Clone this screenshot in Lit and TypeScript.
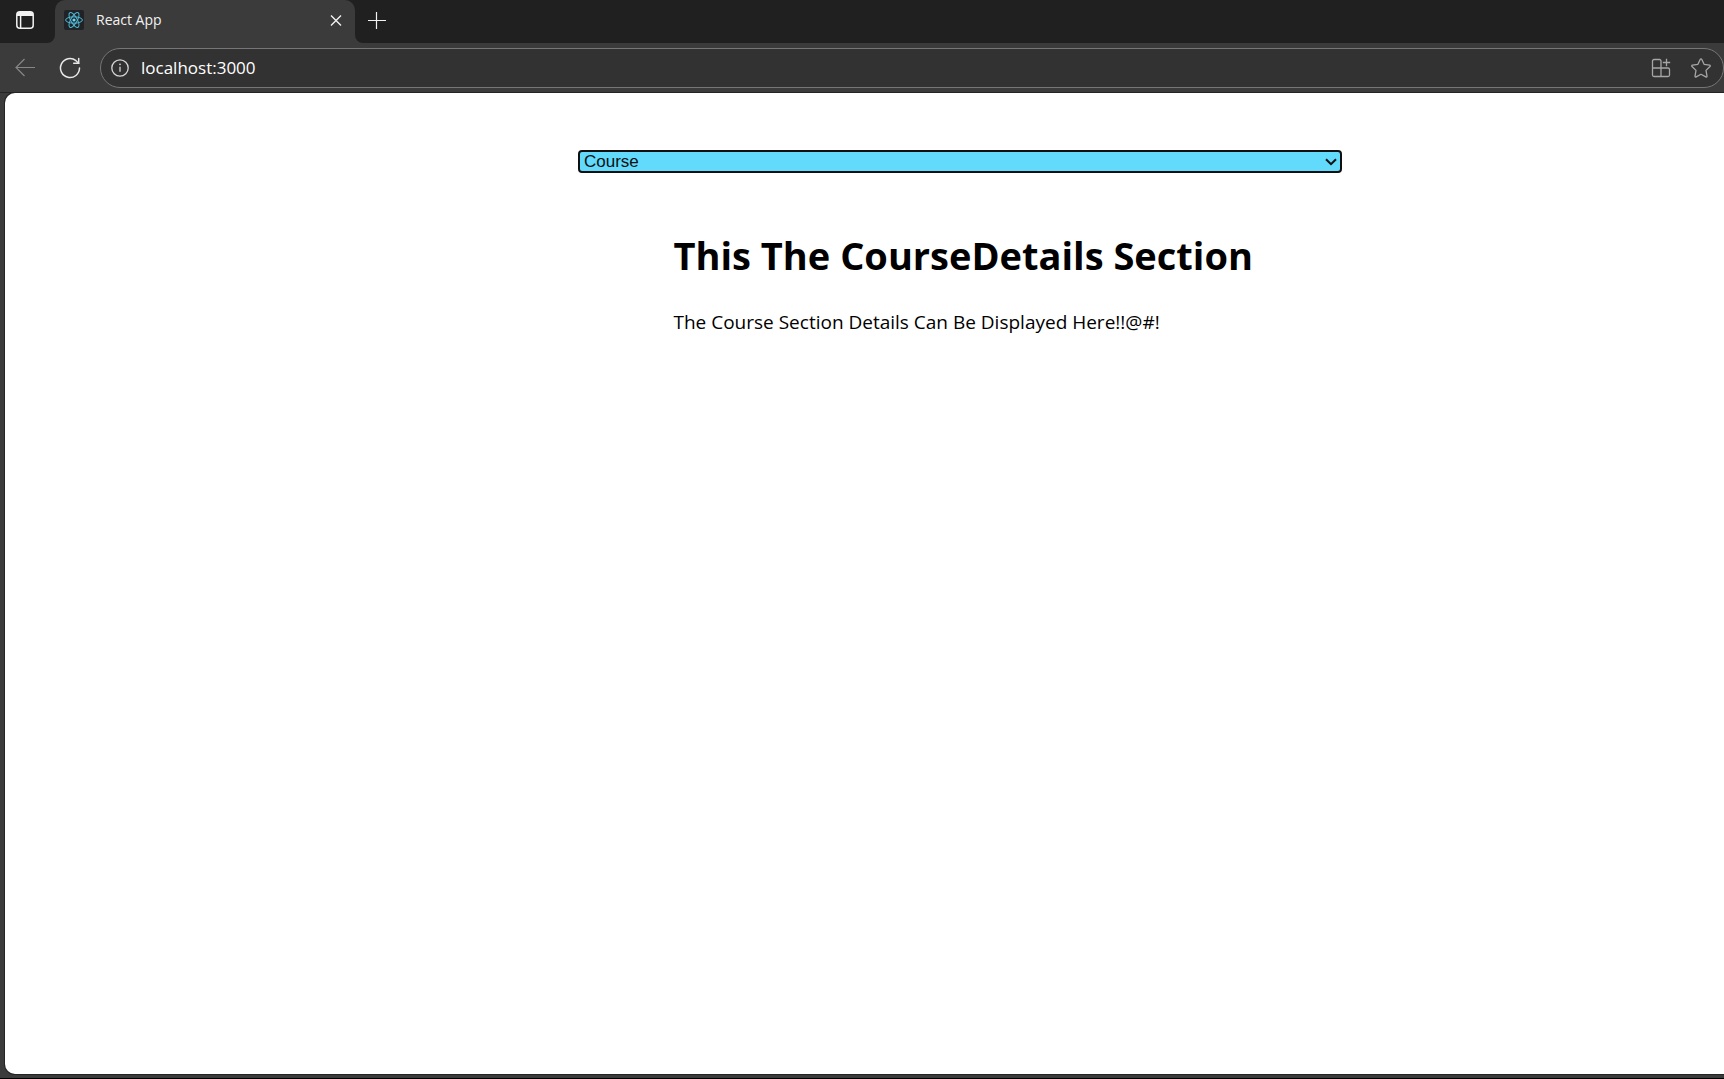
import { LitElement, html, css } from "lit";
import { customElement, state } from "lit/decorators.js";

@customElement("browser-tabs")
class BrowserTabs extends LitElement {
  static styles = css`
    :host {
      display: flex;
      height: 43px;
      color: #f2f2f2;
    }
    button {
      display: flex;
      align-items: center;
      justify-content: center;
      padding: 0;
      border: 0;
      background: none;
      color: inherit;
    }
    svg {
      display: block;
    }
    .row {
      display: flex;
      flex: 1;
      background: linear-gradient(#202020 50%, #3b3b3b 50%);
    }
    .menu-cell,
    .rest {
      display: flex;
      background: #202020;
    }
    .menu-cell {
      border-radius: 0 0 8px 0;
    }
    .rest {
      flex: 1;
      border-radius: 0 0 0 8px;
    }
    .menu {
      width: 55px;
      padding: 0 5px 3px 0;
    }
    .tab {
      display: flex;
      align-items: center;
      box-sizing: border-box;
      width: 300px;
      padding: 0 10px 3px 9px;
      gap: 12px;
      border-radius: 10px 10px 0 0;
      background: #3b3b3b;
    }
    .title {
      flex: 1;
      font: 14px/20px "Open Sans", "Noto Sans", sans-serif;
    }
    .new {
      width: 44px;
      padding-bottom: 4px;
    }
  `;

  render() {
    return html`
      <div class="row">
        <div class="menu-cell">
          <button class="menu" aria-label="Tab actions">
            <svg width="18" height="18" viewBox="0 0 18 18" fill="none" stroke="currentColor" stroke-width="1.5">
              <rect x="0.8" y="0.8" width="16.4" height="16.4" rx="3" />
              <path d="M1 3.5a2.5 2.5 0 0 1 2.5-2.5h11a2.5 2.5 0 0 1 2.5 2.5v1.5H1z" fill="currentColor" stroke="none" />
              <path d="M4.6 5v12" />
            </svg>
          </button>
        </div>
        <div class="tab">
          <svg width="20" height="20" viewBox="0 0 20 20" fill="none" stroke="#4fb9d6">
            <rect width="20" height="20" rx="2" fill="#202226" stroke="none" />
            <ellipse cx="10" cy="10" rx="8.4" ry="3.2" />
            <ellipse cx="10" cy="10" rx="8.4" ry="3.2" transform="rotate(60 10 10)" />
            <ellipse cx="10" cy="10" rx="8.4" ry="3.2" transform="rotate(120 10 10)" />
            <circle cx="10" cy="10" r="1.6" fill="#61dafb" stroke="none" />
          </svg>
          <span class="title">React App</span>
          <button aria-label="Close tab">
            <svg width="18" height="18" viewBox="0 0 18 18" fill="none" stroke="currentColor" stroke-width="1.4">
              <path d="M4 4.5l10 10M14 4.500l-10 10" />
            </svg>
          </button>
        </div>
        <div class="rest">
          <button class="new" aria-label="New tab">
            <svg width="18" height="18" viewBox="0 0 18 18" fill="none" stroke="currentColor" stroke-width="1.2">
              <path d="M0 9.5h18M8.5 1v17" />
            </svg>
          </button>
        </div>
      </div>
    `;
  }
}

@customElement("browser-toolbar")
class BrowserToolbar extends LitElement {
  @state() private address = "localhost:3000";

  static styles = css`
    :host {
      display: flex;
      align-items: center;
      box-sizing: border-box;
      height: 50px;
      padding: 1px 0 0 15px;
      background: #3b3b3b;
      border-bottom: 1px solid #242424;
      color: #e8e8e8;
    }
    button {
      display: block;
      padding: 0;
      border: 0;
      background: none;
      color: inherit;
    }
    svg {
      display: block;
    }
    .back {
      margin-right: 24px;
      color: #868686;
    }
    .reload {
      margin-right: 19px;
    }
    .address {
      display: flex;
      flex: 1;
      align-items: center;
      box-sizing: border-box;
      height: 40px;
      padding: 0 12px 0 10px;
      border: 1px solid #767676;
      border-radius: 20px;
      background: #323232;
    }
    input {
      flex: 1;
      min-width: 0;
      margin: 0 12px;
      padding: 0;
      border: 0;
      outline: 0;
      background: none;
      color: #fff;
      font: 17px/24px "Open Sans", "Noto Sans", sans-serif;
    }
    .info {
      color: #d6d6d6;
    }
    .tools {
      display: flex;
      gap: 20px;
      color: #a6a6a6;
    }
  `;

  render() {
    return html`
      <button class="back" aria-label="Back">
        <svg width="20" height="20" viewBox="0 0 20 20" fill="none" stroke="currentColor" stroke-width="1.2">
          <path d="M20 9.5H1M9.5 1L1 9.5l8.5 8.5" />
        </svg>
      </button>
      <button class="reload" aria-label="Reload">
        <svg width="22" height="22" viewBox="0 0 22 22" fill="none" stroke="currentColor" stroke-width="1.5" stroke-linecap="round">
          <path d="M20.5 11a9.5 9.5 0 1 1-3.5-7.3l2.6 2.5" />
          <path d="M19.7 1.5v4.8h-5" />
        </svg>
      </button>
      <div class="address">
        <svg class="info" width="18" height="18" viewBox="0 0 18 18" fill="none" stroke="currentColor" stroke-width="1.3">
          <circle cx="9" cy="9" r="8.2" />
          <path d="M9 7.8v5" />
          <circle cx="9" cy="5.3" r="0.9" fill="currentColor" stroke="none" />
        </svg>
        <input
          type="text"
          aria-label="Address"
          spellcheck="false"
          .value=${this.address}
          @input=${(e: Event) => (this.address = (e.target as HTMLInputElement).value)}
        />
        <div class="tools">
          <button aria-label="Install app">
            <svg width="20" height="20" viewBox="0 0 20 20" fill="none" stroke="currentColor" stroke-width="1.3">
              <path d="M10 10V3a1.5 1.5 0 0 0-1.5-1.5H3A1.5 1.5 0 0 0 1.5 3v14A1.5 1.5 0 0 0 3 18.500h14a1.500 1.500 0 0 0 1.500-1.500v-5.500A1.500 1.500 0 0 0 17 10zM1.500 10H10v8.500" />
              <path d="M15.5 0.8v7.4M11.8 4.5h7.4" />
            </svg>
          </button>
          <button aria-label="Add to favorites">
            <svg width="20" height="20" viewBox="0 0 20 20" fill="none" stroke="currentColor" stroke-width="1.3" stroke-linejoin="round">
              <path d="M9.300 1.200a.8.8 0 0 1 1.400 0l2.400 5.100 5.500.8a.8.8 0 0 1 .4 1.400l-4 3.900 1 5.700a.8.8 0 0 1-1.200.8L10 16.300l-4.800 2.600a.8.8 0 0 1-1.200-.8l1-5.700-4-3.900a.8.8 0 0 1 .4-1.400l5.500-.8z" />
            </svg>
          </button>
        </div>
      </div>
    `;
  }
}

@customElement("course-page")
class CoursePage extends LitElement {
  static styles = css`
    :host {
      display: grid;
      grid-template-columns: 3fr 4fr 2fr;
      align-content: start;
      background: #fff;
      color: #000;
      border-radius: 10px 0 0 10px;
    }
    .content {
      grid-column: 2;
      padding-top: 57px;
    }
    .picker {
      display: grid;
      align-items: center;
    }
    .picker > * {
      grid-area: 1 / 1;
    }
    select {
      appearance: none;
      box-sizing: border-box;
      width: 100%;
      height: 23px;
      margin: 0;
      padding: 0 4px;
      border: 2px solid #101010;
      border-radius: 4px;
      outline: 0;
      background: #61dafb;
      color: #101010;
      font: 17px/19px "Liberation Sans", Arial, sans-serif;
    }
    .chevron {
      justify-self: end;
      margin-right: 5px;
      pointer-events: none;
    }
    .details {
      margin-top: 55px;
      padding-left: 12.5%;
      font-family: "Open Sans", "Noto Sans", sans-serif;
    }
    h1 {
      margin: 0;
      font-size: 38px;
      line-height: 54px;
      font-weight: 700;
      white-space: nowrap;
    }
    p {
      margin: 26px 0 0;
      font-size: 19px;
      line-height: 28px;
    }
  `;

  render() {
    return html`
      <main class="content">
        <div class="picker">
          <select aria-label="Section">
            <option>Course</option>
          </select>
          <svg class="chevron" width="12" height="8" viewBox="0 0 12 8" fill="none" stroke="#101010" stroke-width="2">
            <path d="M1 1.200l5 5 5-5" />
          </svg>
        </div>
        <section class="details">
          <h1>This The CourseDetails Section</h1>
          <p>The Course Section Details Can Be Displayed Here!!@#!</p>
        </section>
      </main>
    `;
  }
}

@customElement("app-root")
class AppRoot extends LitElement {
  static styles = css`
    :host {
      display: flex;
      flex-direction: column;
      box-sizing: border-box;
      min-height: 100vh;
      background: #3b3b3b;
      border-bottom: 1px solid #000;
    }
    .page {
      flex: 1;
      margin: 0 0 4px 5px;
      box-shadow: 0 0 0 1px #242424;
    }
  `;

  render() {
    return html`
      <browser-tabs></browser-tabs>
      <browser-toolbar></browser-toolbar>
      <course-page class="page"></course-page>
    `;
  }
}
